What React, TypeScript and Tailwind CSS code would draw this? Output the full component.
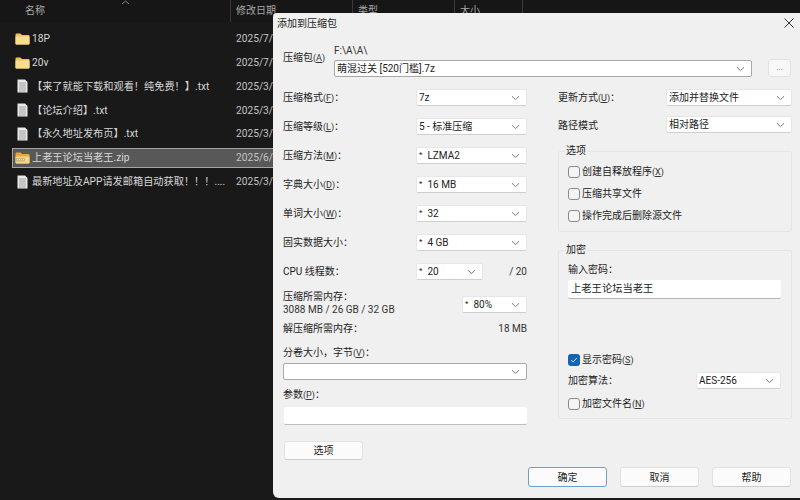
import React from "react";

function Chevron() {
  return (
    <svg width="9" height="6" viewBox="0 0 9 6" fill="none" className="shrink-0">
      <path d="M1 1.2 L4.5 4.6 L8 1.2" stroke="#7a7a7a" strokeWidth="1" />
    </svg>
  );
}

function Sel({ value, className, bordered }: { value?: string; className: string; bordered?: boolean }) {
  const star = value?.startsWith("* ");
  return (
    <div
      className={`h-[17px] flex items-center justify-between pl-[2px] pr-[6px] bg-white rounded-[2px] text-[10px] text-[#1c1c1c] shrink-0 ${
        bordered ? "border border-[#a8a8a8]" : "border border-[#e6e6e6] border-b-[#cfcfcf]"
      } ${className}`}
    >
      <span className="whitespace-pre flex items-center">
        {star ? <span className="text-[8px] mr-[5px] -translate-y-[1px]">*</span> : null}
        {star ? value?.slice(2).trim() : value}
      </span>
      <Chevron />
    </div>
  );
}

function U({ k }: { k: string }) {
  return (
    <span className="text-[9px] text-[#333]">
      (<span className="underline">{k}</span>)
    </span>
  );
}

function Row({ label, value }: { label: React.ReactNode; value: string }) {
  return (
    <div className="flex items-center h-[17px]">
      <div className="w-[133px] text-[10px] text-[#1c1c1c]">{label}</div>
      <Sel value={value} className="w-[111px]" />
    </div>
  );
}

function RightRow({ label, value }: { label: React.ReactNode; value: string }) {
  return (
    <div className="flex items-center h-[17px]">
      <div className="w-[108px] text-[10px] text-[#1c1c1c] pt-[1px]">{label}</div>
      <Sel value={value} className="w-[126px]" />
    </div>
  );
}

function Check({ label, checked, className }: { label: React.ReactNode; checked?: boolean; className?: string }) {
  return (
    <div className={`flex items-center h-[13px] gap-[2px] text-[10px] text-[#1c1c1c] ${className ?? ""}`}>
      {checked ? (
        <div className="w-[12px] h-[12px] rounded-[3px] bg-[#1464b4] flex items-center justify-center shrink-0">
          <svg width="8" height="8" viewBox="0 0 8 8" fill="none">
            <path d="M1.2 4.2 L3.2 6 L6.8 2" stroke="#cfe3f7" strokeWidth="1" />
          </svg>
        </div>
      ) : (
        <div className="w-[12px] h-[12px] rounded-[3px] bg-[#f4f4f4] border border-[#8a8a8a] shrink-0" />
      )}
      <span>{label}</span>
    </div>
  );
}

function Btn({ label, className, primary }: { label: string; className: string; primary?: boolean }) {
  return (
    <div
      className={`flex items-center justify-center bg-[#fbfbfb] rounded-[3px] text-[10px] text-[#1c1c1c] ${
        primary ? "border border-[#6f9fc8]" : "border border-[#e2e2e2] border-b-[#cdcdcd]"
      } ${className}`}
    >
      {label}
    </div>
  );
}

function FolderIcon() {
  return (
    <svg width="15" height="12" viewBox="0 0 15 12" className="shrink-0">
      <path d="M0.5 1.5 Q0.5 0.5 1.5 0.5 H5.5 L7 2 H13.5 Q14.5 2 14.5 3 V10.5 Q14.5 11.5 13.5 11.5 H1.5 Q0.5 11.5 0.5 10.5 Z" fill="#f2c14e" />
      <path d="M0.5 3.6 H14.5 V10.5 Q14.5 11.5 13.5 11.5 H1.5 Q0.5 11.5 0.5 10.5 Z" fill="#fbdf88" />
    </svg>
  );
}

function ZipIcon() {
  return (
    <svg width="15" height="12" viewBox="0 0 15 12" className="shrink-0">
      <path d="M0.5 1.5 Q0.5 0.5 1.5 0.5 H5.5 L7 2 H13.5 Q14.5 2 14.5 3 V10.5 Q14.5 11.5 13.5 11.5 H1.5 Q0.5 11.5 0.5 10.5 Z" fill="#e8a93a" />
      <path d="M0.5 4.5 H14.5 V10.5 Q14.5 11.5 13.5 11.5 H1.5 Q0.5 11.5 0.5 10.5 Z" fill="#f7d87e" />
      <rect x="1" y="6" width="9" height="3.5" fill="#c9b27a" />
      <path d="M2 7.7 H9" stroke="#f4efe0" strokeWidth="1" strokeDasharray="1 1" />
    </svg>
  );
}

function DocIcon() {
  return (
    <svg width="15" height="14" viewBox="0 0 15 14" className="shrink-0">
      <path d="M2.5 0.5 H10 L12.5 3 V13.5 H2.5 Z" fill="#e9e9e9" />
      <path d="M4 4 H11 M4 6 H11 M4 8 H11 M4 10 H11 M4 12 H11" stroke="#8f8f8f" strokeWidth="0.8" />
    </svg>
  );
}

const files: { name: string; date: string; kind: "folder" | "doc" | "zip" }[] = [
  { name: "18P", date: "2025/7/1 12:00", kind: "folder" },
  { name: "20v", date: "2025/7/1 12:00", kind: "folder" },
  { name: "【来了就能下载和观看！纯免费！】.txt", date: "2025/3/1 12:00", kind: "doc" },
  { name: "【论坛介绍】.txt", date: "2025/3/1 12:00", kind: "doc" },
  { name: "【永久地址发布页】.txt", date: "2025/3/1 12:00", kind: "doc" },
  { name: "上老王论坛当老王.zip", date: "2025/6/1 12:00", kind: "zip" },
  { name: "最新地址及APP请发邮箱自动获取！！！....", date: "2025/3/1 12:00", kind: "doc" },
];

export default function App() {
  return (
    <div className="relative w-[800px] h-[500px] overflow-hidden bg-[#191919] font-['Roboto','Noto_Sans_CJK_SC',sans-serif]">
      {/* Explorer */}
      <div className="relative flex h-[22px] text-[10px] leading-[22px] text-[#a8a8a8] bg-[#161616]">
        <div className="w-[231px] pl-[25px] border-r border-[#3a3a3a]">名称</div>
        <div className="w-[122px] pl-[5px] border-r border-[#3a3a3a]">修改日期</div>
        <div className="w-[102px] pl-[5px] border-r border-[#3a3a3a]">类型</div>
        <div className="w-[68px] pl-[5px] border-r border-[#3a3a3a]">大小</div>
        <svg width="9" height="5" viewBox="0 0 9 5" fill="none" className="absolute left-[121px] top-0">
          <path d="M1 4 L4.5 1 L8 4" stroke="#888" strokeWidth="1" />
        </svg>
      </div>
      <div className="pt-[5px] flex flex-col text-[10.2px] text-[#d8d8d8]">
        {files.map((f) => (
          <div key={f.name} className="flex items-center h-[23.8px] ml-[12px] w-[270px]">
            <div
              className={`flex items-center w-full h-[20px] ${
                f.kind === "zip" ? "bg-[#585858] border border-[#a5a5a5] pl-[2px]" : "pl-[3px]"
              }`}
            >
              <div className="w-[17px] flex items-center shrink-0">
                {f.kind === "folder" ? <FolderIcon /> : f.kind === "zip" ? <ZipIcon /> : <DocIcon />}
              </div>
              <div className="w-[204px] shrink-0 whitespace-nowrap overflow-hidden">{f.name}</div>
              <div className="whitespace-nowrap text-[#c4c4c4]">{f.date}</div>
            </div>
          </div>
        ))}
      </div>

      {/* Dialog */}
      <div className="absolute left-[273px] top-[13px] w-[527px] h-[485px] bg-[#f0f0f0] rounded-tl-[4px] rounded-bl-[6px] flex flex-col text-[#1c1c1c]">
        <div className="h-[20px] shrink-0 flex items-center justify-between pl-[4px] pr-[6px] text-[10px]">
          <span>添加到压缩包</span>
          <svg width="10" height="10" viewBox="0 0 10 10" fill="none">
            <path d="M0.5 0.5 L9.5 9.5 M9.5 0.5 L0.5 9.5" stroke="#333" strokeWidth="1" />
          </svg>
        </div>

        <div className="flex pl-[10px] mt-[11px]">
          <div className="w-[51px] text-[10px] pt-[7px] leading-[14px]">
            压缩包<U k="A" />
          </div>
          <div className="flex flex-col">
            <div className="h-[14px] leading-[14px] text-[10px] text-[#333]">F:\A\A\</div>
            <div className="flex mt-[2px]">
              <Sel value="萌混过关 [520门槛].7z" bordered className="w-[418px]" />
              <div className="w-[23px] h-[18px] ml-[16px] -mt-[1px] bg-[#f8f8f8] border border-[#e2e2e2] rounded-[3px] flex items-center justify-center text-[9px] text-[#777]">
                ...
              </div>
            </div>
          </div>
        </div>

        <div className="flex pl-[10px] mt-[12px]">
          {/* Left column */}
          <div className="w-[244px] flex flex-col">
            <div className="flex flex-col gap-[12px]">
              <Row label={<>压缩格式<U k="F" />：</>} value="7z" />
              <Row label={<>压缩等级<U k="L" />：</>} value="5 - 标准压缩" />
              <Row label={<>压缩方法<U k="M" />：</>} value="* LZMA2" />
              <Row label={<>字典大小<U k="D" />：</>} value="* 16 MB" />
              <Row label={<>单词大小<U k="W" />：</>} value="* 32" />
              <Row label="固实数据大小：" value="* 4 GB" />
              <div className="flex items-center h-[17px]">
                <div className="w-[133px] text-[10px]">CPU 线程数：</div>
                <Sel value="* 20" className="w-[67px]" />
                <div className="flex-1 text-right text-[10px] text-[#333]">/ 20</div>
              </div>
            </div>
            <div className="flex justify-between mt-[10px] h-[26px]">
              <div className="text-[10px] leading-[13px]">
                <div>压缩所需内存：</div>
                <div className="text-[#333] whitespace-nowrap">3088 MB / 26 GB / 32 GB</div>
              </div>
              <Sel value="* 80%" className="w-[65px] mt-[6px]" />
            </div>
            <div className="flex justify-between mt-[6px] h-[14px] leading-[14px] text-[10px]">
              <span>解压缩所需内存：</span>
              <span className="text-[#333]">18 MB</span>
            </div>
            <div className="mt-[10px] h-[14px] leading-[14px] text-[10px]">
              分卷大小，字节<U k="V" />：
            </div>
            <Sel bordered className="w-[244px] mt-[3px]" />
            <div className="mt-[8px] h-[14px] leading-[14px] text-[10px]">
              参数<U k="P" />：
            </div>
            <div className="w-[243px] ml-[1px] h-[18px] mt-[5px] bg-white border-b border-[#bdbdbd] rounded-[2px]" />
            <Btn label="选项" className="w-[79px] h-[19px] ml-[1px] mt-[16px]" />
          </div>

          {/* Right column */}
          <div className="w-[234px] ml-[31px] flex flex-col">
            <div className="flex flex-col gap-[10px]">
              <RightRow label={<>更新方式<U k="U" />：</>} value="添加并替换文件" />
              <RightRow label="路径模式" value="相对路径" />
            </div>
            <fieldset className="mt-[11px] h-[88px] border border-[#e5e5e5] rounded-[2px] pl-[9px] pr-[10px]">
              <legend className="-ml-[3px] px-[1px] h-[14px] leading-[14px] text-[10px]">选项</legend>
              <div className="flex flex-col gap-[9px] pt-[7px]">
                <Check label={<>创建自释放程序<U k="X" /></>} />
                <Check label="压缩共享文件" />
                <Check label="操作完成后删除源文件" />
              </div>
            </fieldset>
            <fieldset className="mt-[11px] h-[176px] border border-[#e5e5e5] rounded-[2px] pl-[9px] pr-[10px]">
              <legend className="-ml-[3px] px-[1px] h-[14px] leading-[14px] text-[10px]">加密</legend>
              <div className="flex flex-col pt-[6px]">
                <div className="h-[14px] leading-[14px] text-[10px]">输入密码：</div>
                <div className="mt-[3px] h-[19px] bg-white border-b border-[#b5b5b5] rounded-[2px] flex items-center pl-[3px] text-[10.3px]">
                  上老王论坛当老王
                </div>
                <Check checked label={<>显示密码<U k="S" /></>} className="mt-[54px]" />
                <div className="flex items-center justify-between h-[17px] mt-[6px]">
                  <span className="text-[10px]">加密算法：</span>
                  <Sel value="AES-256" className="w-[85px]" />
                </div>
                <Check label={<>加密文件名<U k="N" /></>} className="mt-[8px]" />
              </div>
            </fieldset>
          </div>
        </div>

        <div className="flex justify-end gap-[13px] pr-[9px] mt-[7px]">
          <Btn primary label="确定" className="w-[79px] h-[20px]" />
          <Btn label="取消" className="w-[79px] h-[20px]" />
          <Btn label="帮助" className="w-[79px] h-[20px]" />
        </div>
      </div>
    </div>
  );
}
